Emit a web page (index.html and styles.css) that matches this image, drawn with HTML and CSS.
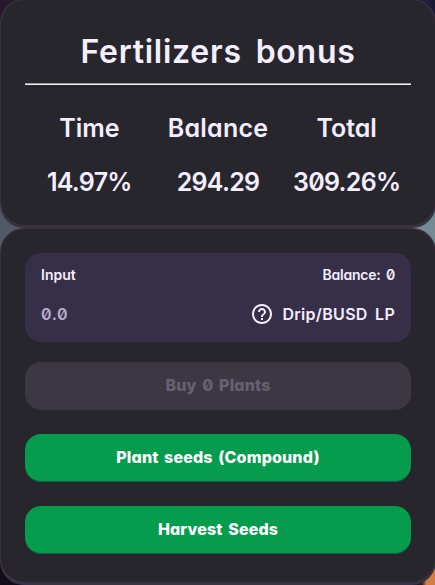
FILE: index.html
```
<!DOCTYPE html>
<html lang="en">

<head>
    <title>Fertilizers bonus</title>
    <meta charset="utf-8">
    <meta name="viewport" content="width=device-width, initial-scale=1">
    <link rel="stylesheet" href="styles.css">
</head>

<body>
    <div class="card card-bonus">
        <div class="card-inner">
            <h2>Fertilizers bonus</h2>
            <div class="stats">
                <span class="time">Time</span>
                <span class="balance">Balance</span>
                <span class="total">Total</span>
                <span class="value">14.97%</span>
                <span class="value">294.29</span>
                <span class="value">309.26%</span>
            </div>
        </div>
    </div>
    <div class="card card-form">
        <div class="card-inner">
            <div class="input-panel">
                <div class="row labels">
                    <label for="amount">Input</label>
                    <span class="wallet">Balance: 0</span>
                </div>
                <div class="row">
                    <input id="amount" type="text" placeholder="0.0">
                    <div class="token">
                        <svg width="24" height="24" viewBox="0 0 24 24" fill="currentColor">
                            <path d="M11 18h2v-2h-2v2zm1-16C6.480 2 2 6.480 2 12s4.480 10 10 10 10-4.480 10-10S17.520 2 12 2zm0 18c-4.410 0-8-3.590-8-8s3.590-8 8-8 8 3.590 8 8-3.590 8-8 8zm0-14c-2.210 0-4 1.790-4 4h2c0-1.100.9-2 2-2s2 .9 2 2c0 2-3 1.750-3 5h2c0-2.250 3-2.500 3-5 0-2.210-1.790-4-4-4z" />
                        </svg>
                        <span>Drip/BUSD LP</span>
                    </div>
                </div>
            </div>
            <button class="buy" disabled>Buy 0 Plants</button>
            <button class="compound">Plant seeds (Compound)</button>
            <button class="harvest">Harvest Seeds</button>
        </div>
    </div>
</body>

</html>
```
FILE: styles.css
```
* {
    margin: 0;
    padding: 0;
    box-sizing: border-box;
}

body {
    height: 585px;
    overflow: hidden;
    background:
        linear-gradient(90deg, #261528, transparent 40%, transparent 60%, #1b1834) 0 0 / 100% 40px no-repeat,
        linear-gradient(90deg, #100d18 85%, #2c1622 97%, #d07d48 98%) 0 100% / 100% 50px no-repeat,
        linear-gradient(90deg, #525966, #758b93);
    color: #f4eeff;
    font-family: Inter, "Liberation Sans", sans-serif;
    font-feature-settings: "cv11", "zero";
}

/* Cards */
.card {
    width: 436px;
    padding: 1px 1px 3px;
    background-color: #383241;
    border-radius: 24px;
}

.card-inner {
    height: 100%;
    padding: 24px;
    background-color: #27262c;
    border-radius: 24px;
}

.card-bonus {
    height: 229px;
    margin-top: -1px;
}

.card-form {
    height: 357px;
}

/* Bonus card */
h2 {
    height: 61px;
    padding-top: 8px;
    border-bottom: 1px solid #eee;
    box-shadow: inset 0 -1px 0 #9a9a9a;
    font-size: 32px;
    font-weight: 600;
    line-height: 40px;
    text-align: center;
    letter-spacing: 0.75px;
    word-spacing: 5px;
}

.stats {
    display: grid;
    grid-template-columns: repeat(3, 1fr);
    grid-auto-rows: 54px;
    padding-top: 16px;
    font-size: 25px;
    font-weight: 600;
    line-height: 54px;
    text-align: center;
}

.balance {
    letter-spacing: 0.2px;
}

.value {
    letter-spacing: -0.7px;
}

/* Input panel */
.input-panel {
    height: 89px;
    margin-bottom: 20px;
    padding: 13px 16px 0;
    background-color: #372f47;
    border-radius: 16px;
}

.row {
    display: flex;
    justify-content: space-between;
    align-items: center;
}

.labels {
    height: 17px;
    margin-bottom: 19px;
    font-size: 14px;
    font-weight: 600;
}

.wallet {
    letter-spacing: -0.2px;
    word-spacing: 2px;
}

input {
    width: 120px;
    background: none;
    border: none;
    outline: none;
    font: inherit;
    font-feature-settings: inherit;
    font-size: 16px;
    font-weight: 600;
    letter-spacing: 0.6px;
    color: #f4eeff;
}

input::placeholder {
    color: #b8add2;
}

.token {
    display: flex;
    align-items: center;
    gap: 8px;
    font-size: 16px;
    font-weight: 600;
    letter-spacing: 0.3px;
    word-spacing: 3px;
}

/* Buttons */
button {
    display: block;
    width: 100%;
    height: 48px;
    margin-bottom: 24px;
    padding-bottom: 2px;
    background-color: #059c4e;
    border: none;
    border-radius: 16px;
    box-shadow: inset 0 -1px 0 rgba(14, 14, 44, 0.4);
    color: #fff;
    font: inherit;
    font-feature-settings: inherit;
    font-size: 16px;
    font-weight: 800;
    letter-spacing: 0.15px;
    word-spacing: 2px;
}

button:disabled {
    background-color: #3c3742;
    box-shadow: none;
    color: #666171;
}
```
